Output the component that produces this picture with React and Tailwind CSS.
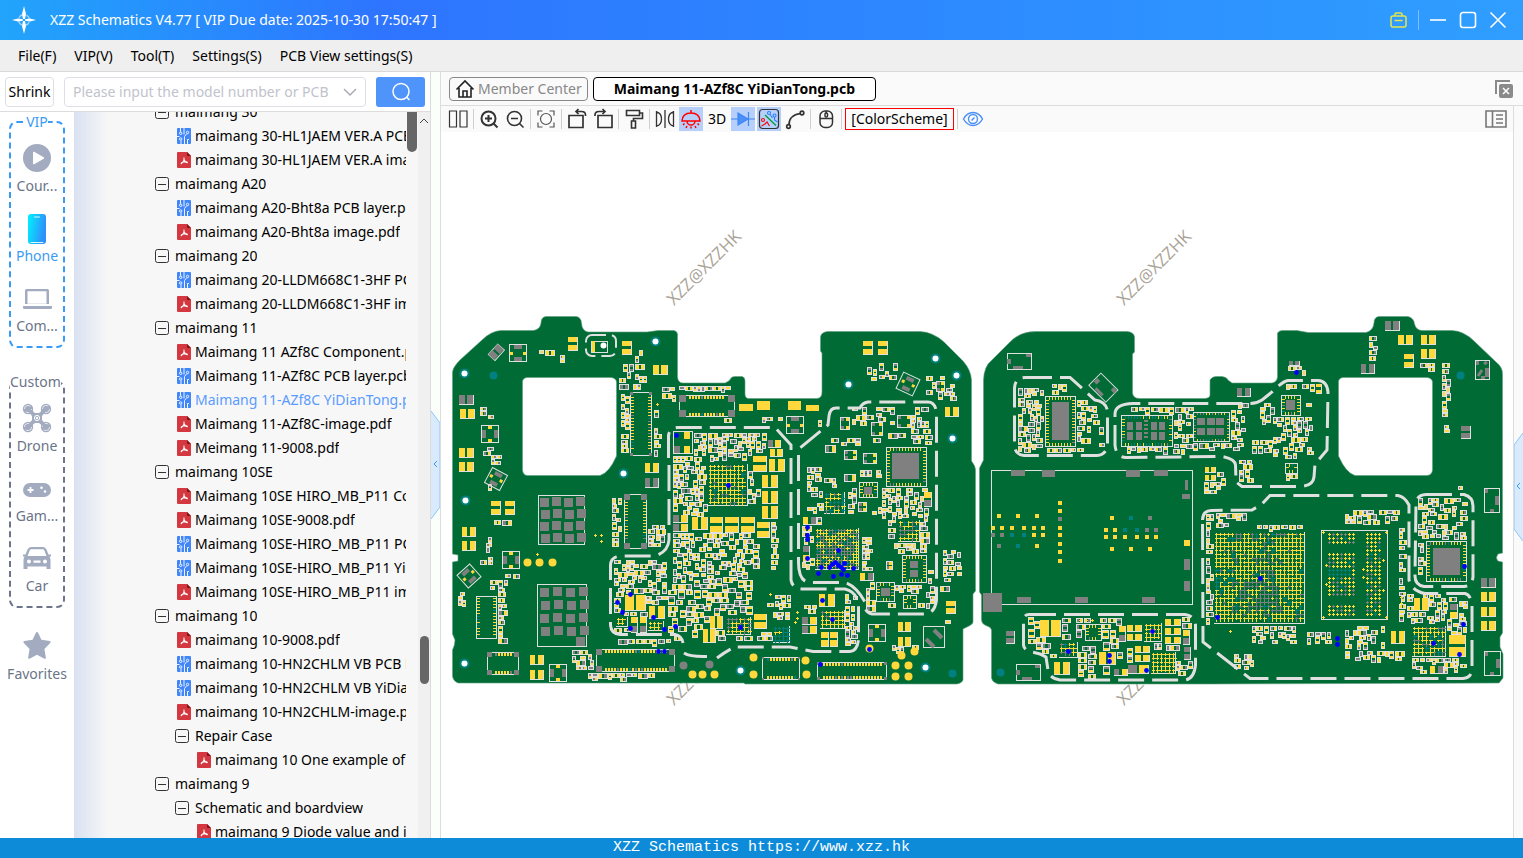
import { useState } from "react";

const MENUS = ["File(F)", "VIP(V)", "Tool(T)", "Settings(S)", "PCB View settings(S)"];

// type: group | pcb | pdf, level: indent in the tree
const TREE = [
  { type: "group", level: 0, name: "maimang 30" },
  { type: "pcb", level: 1, name: "maimang 30-HL1JAEM VER.A PCB layer.pcb" },
  { type: "pdf", level: 1, name: "maimang 30-HL1JAEM VER.A image.pdf" },
  { type: "group", level: 0, name: "maimang A20" },
  { type: "pcb", level: 1, name: "maimang A20-Bht8a PCB layer.pcb" },
  { type: "pdf", level: 1, name: "maimang A20-Bht8a image.pdf" },
  { type: "group", level: 0, name: "maimang 20" },
  { type: "pcb", level: 1, name: "maimang 20-LLDM668C1-3HF PCB layer.pcb" },
  { type: "pdf", level: 1, name: "maimang 20-LLDM668C1-3HF image.pdf" },
  { type: "group", level: 0, name: "maimang 11" },
  { type: "pdf", level: 1, name: "Maimang 11 AZf8C Component.pdf" },
  { type: "pcb", level: 1, name: "Maimang 11-AZf8C PCB layer.pcb" },
  { type: "pcb", level: 1, name: "Maimang 11-AZf8C YiDianTong.pcb" },
  { type: "pdf", level: 1, name: "Maimang 11-AZf8C-image.pdf" },
  { type: "pdf", level: 1, name: "Meimang 11-9008.pdf" },
  { type: "group", level: 0, name: "maimang 10SE" },
  { type: "pdf", level: 1, name: "Maimang 10SE HIRO_MB_P11 Component.pdf" },
  { type: "pdf", level: 1, name: "Maimang 10SE-9008.pdf" },
  { type: "pcb", level: 1, name: "Maimang 10SE-HIRO_MB_P11 PCB layer.pcb" },
  { type: "pcb", level: 1, name: "Maimang 10SE-HIRO_MB_P11 YiDianTong.pcb" },
  { type: "pdf", level: 1, name: "Maimang 10SE-HIRO_MB_P11 image.pdf" },
  { type: "group", level: 0, name: "maimang 10" },
  { type: "pdf", level: 1, name: "maimang 10-9008.pdf" },
  { type: "pcb", level: 1, name: "maimang 10-HN2CHLM VB PCB layer.pcb" },
  { type: "pcb", level: 1, name: "maimang 10-HN2CHLM VB YiDianTong.pcb" },
  { type: "pdf", level: 1, name: "maimang 10-HN2CHLM-image.pdf" },
  { type: "group", level: 1, name: "Repair Case" },
  { type: "pdf", level: 2, name: "maimang 10 One example of repair.pdf" },
  { type: "group", level: 0, name: "maimang 9" },
  { type: "group", level: 1, name: "Schematic and boardview" },
  { type: "pdf", level: 2, name: "maimang 9 Diode value and image.pdf" },
];

const INDENT = ["pl-[81px]", "pl-[101px]", "pl-[121px]"];

/* ---------- board drawing ---------- */

const layers = { line: [], yellow: [], gray: [], teal: [], blue: [] };
const taken = [];

let seed = 20251;
const rnd = () => {
  seed = (seed * 16807) % 2147483647;
  return seed / 2147483647;
};

const fill = (c, x, y, w, h) => layers[c].push(`M${x} ${y}h${w}v${h}h${-w}z`);
const frame = (x, y, w, h) => layers.line.push(`M${x + 0.5} ${y + 0.5}h${w - 1}v${h - 1}h${1 - w}z`);
const reserve = (x, y, w, h) => taken.push([x, y, w, h]);
const isFree = (x, y, w, h) =>
  !taken.some(([a, b, c, d]) => x < a + c && a < x + w && y < b + d && b < y + h);

// two pads, split across (h) or down (v)
const pair = (x, y, w, h, dir = "h", c = "yellow", c2 = c) => {
  layers.line.push(`M${x} ${y + h + 0.5}h${w + 0.5}V${y}`);
  if (dir === "h") {
    const p = Math.floor((w - 2) / 2);
    fill(c, x, y, p, h);
    fill(c2, x + w - p, y, p, h);
  } else {
    const p = Math.floor((h - 2) / 2);
    fill(c, x, y, w, p);
    fill(c2, x, y + h - p, w, p);
  }
  reserve(x, y, w + 1, h + 1);
};

// framed part with a pad in the middle of each side
const quad = (x, y, s, sides) => {
  frame(x, y, s, s);
  const m = Math.floor(s / 2);
  const a = sides === "gray-lr";
  fill(a ? "gray" : "yellow", x + 1, y + m - (a ? 4 : 1), a ? 4 : 3, a ? 8 : 3);
  fill(a ? "gray" : "yellow", x + s - (a ? 5 : 4), y + m - (a ? 4 : 1), a ? 4 : 3, a ? 8 : 3);
  fill(a ? "yellow" : "gray", x + m - (a ? 2 : 4), y + 1, a ? 4 : 8, a ? 3 : 4);
  fill(a ? "yellow" : "gray", x + m - (a ? 2 : 4), y + s - (a ? 4 : 5), a ? 4 : 8, a ? 3 : 4);
  reserve(x, y, s, s);
};

const mixed = (mix) => {
  const r = rnd();
  if (r < mix[0]) return "yellow";
  return r < mix[0] + mix[1] ? "gray" : "teal";
};

const ring = (x, y, w, h, step = 3, mix = [0.85, 0.1], len = 3) => {
  frame(x, y, w, h);
  for (let i = x + 4; i < x + w - 4; i += step) {
    fill(mixed(mix), i, y + 1, 1, len);
    fill(mixed(mix), i, y + h - 1 - len, 1, len);
  }
  for (let j = y + 4; j < y + h - 4; j += step) {
    fill(mixed(mix), x + 1, j, len, 1);
    fill(mixed(mix), x + w - 1 - len, j, len, 1);
  }
  reserve(x, y, w, h);
};

const connector = (x, y, w, h, dir, end = 6) => {
  frame(x, y, w, h);
  if (dir === "h") {
    for (let i = x + end + 3; i < x + w - end - 3; i += 3) {
      fill(mixed([0.85, 0.1]), i, y + 1, 2, 3);
      fill(mixed([0.85, 0.1]), i, y + h - 4, 2, 3);
    }
  } else {
    for (let j = y + end + 2; j < y + h - end - 2; j += 3) {
      fill(mixed([0.8, 0.1]), x + 1, j, 3, 1);
      fill(mixed([0.8, 0.1]), x + w - 4, j, 3, 1);
    }
  }
  if (end > 0) {
    [[x, y], [x + w - end, y], [x, y + h - end], [x + w - end, y + h - end]].forEach(([a, b]) =>
      fill("gray", a, b, end, end)
    );
  }
  reserve(x, y, w, h);
};

const plus = (c, x, y) => layers[c].push(`M${x - 1} ${y}h3v1h-3zM${x} ${y - 1}h1v3h-1z`);

const bga = (x, y, w, h, mix, pitch = 4, pick = null) => {
  for (let j = y + 2; j < y + h - 1; j += pitch) {
    for (let i = x + 2; i < x + w - 1; i += pitch) {
      const c = pick ? pick(i - x, j - y) : mixed(mix);
      plus(c, i, j);
      if (rnd() < 0.75) fill(c, i, j, pitch, 1);
      if (rnd() < 0.75) fill(c, i, j, 1, pitch);
    }
  }
  layers.line.push(`M${x} ${y + h + 0.5}h${w + 0.5}V${y}`);
  reserve(x, y, w + 1, h + 1);
};

// ball colours of the processor: gray core bands, yellow border
const cpuBall = (i, j) => {
  if (i > 24 && i < 66 && j > 54 && j < 78) return mixed([0.2, 0.75]);
  if (i > 16 && i < 66 && Math.floor(j / 8) % 3 === 0) return mixed([0.35, 0.6]);
  if (i > 46 && i < 62) return mixed([0.45, 0.45]);
  if (i < 18 && j > 36 && j < 60) return mixed([0.5, 0.1]);
  return mixed([0.9, 0.07]);
};

const blocks = (x, y, cols, rows, size, gap) => {
  for (let r = 0; r < rows; r++)
    for (let c = 0; c < cols; c++)
      fill("gray", x + c * (size + gap) + (r % 2), y + r * (size + gap) - (c % 2), size, size);
};

const SIZES = [[7, 4], [7, 5], [4, 7], [5, 8], [5, 4], [8, 5], [10, 6], [6, 4], [4, 6]];

// loose small parts over an area, kept off whatever is already placed
const cluster = (x, y, w, h, density = 0.8, big = false) => {
  for (let j = y; j + 4 <= y + h; j += 2) {
    for (let i = x; i + 4 <= x + w; i += 2) {
      const s = SIZES[Math.floor(rnd() * SIZES.length)];
      const pw = s[0] + (big ? 2 : 0);
      const ph = s[1] + (big ? 1 : 0);
      if (i + pw > x + w + 1 || j + ph > y + h + 1) continue;
      if (!isFree(i, j, pw, ph)) continue;
      if (rnd() > density) {
        reserve(i, j, 3, 3);
        continue;
      }
      frame(i, j, pw, ph);
      const c = rnd() < 0.64 ? "yellow" : "gray";
      const c2 = rnd() < 0.7 ? "yellow" : "gray";
      if (pw >= ph) {
        const p = Math.max(2, Math.floor((pw - 4) / 2));
        fill(c, i + 1, j + 1, p, ph - 2);
        fill(c2, i + pw - 1 - p, j + 1, p, ph - 2);
      } else {
        const p = Math.max(2, Math.floor((ph - 4) / 2));
        fill(c, i + 1, j + 1, pw - 2, p);
        fill(c2, i + 1, j + ph - 1 - p, pw - 2, p);
      }
      reserve(i, j, pw, ph);
    }
  }
};

const PAIRS = [
  // left board
  [568, 337, 9, 13, "v"], [622, 341, 9, 13, "v"], [653, 365, 14, 9], [459, 395, 14, 9, "h", "gray"],
  [460, 409, 14, 9], [459, 448, 14, 9], [459, 462, 14, 9], [491, 501, 9, 13, "v"], [505, 501, 9, 13, "v"],
  [645, 463, 13, 9], [645, 478, 13, 9, "h", "gray"], [462, 527, 13, 9], [462, 541, 13, 9],
  [530, 655, 13, 9], [530, 670, 13, 9], [863, 341, 9, 13, "v"], [878, 341, 9, 13, "v"], [945, 407, 13, 9],
  [753, 456, 13, 15, "v"], [769, 459, 15, 12], [762, 475, 15, 12], [762, 491, 15, 12], [762, 506, 15, 12],
  [710, 517, 12, 15, "v"], [725, 517, 13, 15, "v"], [741, 517, 13, 15, "v"], [757, 522, 12, 15, "v"],
  [692, 517, 15, 12], [768, 440, 12, 7, "h", "gray", "yellow"], [770, 449, 12, 7], [819, 594, 15, 12],
  [754, 614, 12, 14, "v"], [710, 616, 12, 12], [898, 622, 12, 9], [898, 637, 12, 9], [946, 601, 9, 12, "v"],
  [821, 632, 7, 14, "v"], [830, 632, 7, 14, "v"], [802, 617, 14, 7, "h", "gray", "yellow"],
  [802, 626, 14, 7, "h", "gray", "yellow"], [625, 595, 20, 15], [649, 606, 15, 12],
  [631, 617, 6, 15, "v", "yellow", "gray"], [640, 617, 6, 15, "v", "yellow", "gray"],
  [673, 515, 14, 7, "h", "gray", "yellow"], [673, 524, 14, 7, "h", "gray", "yellow"],
  [703, 629, 12, 13], [924, 492, 7, 14, "v", "yellow", "gray"], [803, 517, 13, 7, "h", "yellow", "gray"],
  [860, 573, 13, 7, "h", "yellow", "gray"], [803, 546, 6, 15, "v", "gray", "yellow"],
  // right board
  [1385, 321, 14, 9, "h", "gray"], [1398, 335, 14, 9], [1421, 335, 14, 9], [1421, 349, 14, 9],
  [1404, 354, 9, 13, "v"], [1361, 364, 13, 9, "h", "gray"], [1461, 426, 9, 12, "v", "gray"],
  [1481, 578, 14, 9, "h", "gray"], [1481, 592, 14, 9], [1481, 607, 14, 9], [1481, 621, 14, 9],
  [1237, 388, 13, 8, "h", "gray"], [1205, 467, 10, 5], [1205, 475, 10, 5], [1040, 620, 20, 16],
  [1054, 662, 15, 12], [1165, 619, 15, 6], [1165, 628, 15, 6], [1165, 637, 15, 6], [1127, 625, 14, 6],
  [1127, 634, 14, 6], [1135, 646, 14, 6], [1135, 655, 14, 6], [1099, 652, 16, 12], [1128, 665, 20, 8, "h", "gray", "yellow"],
  [1006, 631, 8, 12, "v", "gray"], [1119, 626, 6, 15, "v", "yellow", "gray"], [1414, 598, 14, 12],
  [1449, 635, 16, 21, "v"], [1391, 631, 13, 12], [1430, 666, 13, 7, "h", "yellow", "gray"],
  [1450, 604, 7, 14, "v", "gray", "yellow"], [1289, 361, 10, 4, "h", "gray"], [1316, 384, 5, 9, "v"],
  [1114, 669, 13, 6, "h", "gray", "yellow"], [1183, 630, 6, 14, "v", "yellow", "gray"], [1184, 647, 6, 12, "v", "gray"],
];
PAIRS.forEach((p) => pair(...p));

[[509, 344, 18, "gray-tb"], [481, 425, 18, "gray-lr"], [502, 551, 18, "gray-lr"], [549, 664, 18, "gray-lr"],
  [786, 416, 18, "gray-tb"], [868, 624, 18, "gray-lr"]].forEach((q) => quad(...q));

// connectors
connector(630, 392, 22, 64, "v", 3);
connector(679, 395, 56, 22, "h", 7);
connector(624, 494, 23, 55, "v", 6);
connector(476, 596, 21, 43, "v", 0);
connector(487, 652, 32, 23, "h", 5);
connector(596, 649, 79, 23, "h", 6);
connector(762, 657, 38, 23, "h", 2);
connector(817, 662, 70, 18, "h", 3);

// shield pads
frame(538, 495, 47, 50);
blocks(540, 498, 4, 4, 9, 3);
reserve(538, 495, 47, 50);
frame(537, 584, 50, 63);
blocks(540, 588, 4, 4, 9, 4);
fill("gray", 576, 637, 9, 9);
reserve(537, 584, 50, 63);

// packages, left board
bga(708, 464, 39, 41, [0.85, 0.1]);
bga(815, 528, 43, 41, [0.35, 0.55], 3);
bga(824, 492, 20, 21, [0.4, 0.3], 4);
bga(898, 520, 21, 21, [0.7, 0.2], 4);
bga(820, 610, 24, 18, [0.9, 0.05]);
bga(726, 617, 24, 17, [0.6, 0.4]);
bga(773, 626, 16, 16, [0.1, 0]);
bga(648, 621, 15, 9, [1, 0]);
bga(616, 617, 11, 9, [0.9, 0]);
ring(886, 447, 41, 40);
fill("gray", 892, 453, 27, 26);
ring(859, 482, 19, 16);
fill("gray", 864, 487, 8, 8);
ring(902, 555, 25, 28);
fill("gray", 910, 561, 8, 7);
fill("gray", 910, 570, 8, 7);
ring(876, 582, 19, 20);
fill("gray", 881, 588, 9, 8);
ring(903, 595, 14, 14);
frame(673, 431, 20, 23);
fill("yellow", 684, 432, 6, 7);
fill("yellow", 684, 446, 6, 7);
fill("gray", 674, 446, 6, 7);
reserve(673, 431, 20, 23);
frame(591, 341, 17, 12);
fill("yellow", 592, 341, 3, 11);
frame(923, 626, 22, 22);
reserve(923, 626, 22, 22);
[[840, 417, 10, 13], [871, 422, 12, 14], [897, 415, 14, 13], [844, 450, 13, 10], [863, 453, 14, 11],
  [825, 445, 11, 8], [936, 381, 9, 11], [844, 474, 12, 8], [858, 502, 9, 10], [886, 561, 7, 9]].forEach(
  ([x, y, w, h]) => {
    frame(x, y, w, h);
    [[x + 1, y + 1], [x + w - 4, y + 1], [x + 1, y + h - 4], [x + w - 4, y + h - 4]].forEach(([a, b], i) =>
      fill(i % 2 ? "yellow" : "gray", a, b, 3, 3)
    );
    reserve(x, y, w, h);
  }
);
[[739, 404, 14, 7], [757, 401, 13, 9], [788, 401, 13, 9], [806, 405, 13, 6]].forEach((r) => fill("yellow", ...r));

// packages, right board
ring(1045, 396, 31, 51);
fill("gray", 1052, 402, 17, 38);
ring(1121, 415, 52, 32, 3, [0.5, 0.1]);
[1127, 1136, 1151, 1159].forEach((x) => [422, 432].forEach((y) => fill("gray", x, y, 6, 8)));
[420, 424, 428, 432, 436].forEach((y) => fill("gray", 1144, y, 4, 2));
ring(1193, 412, 37, 30, 3, [0.4, 0.5], 2);
[1197, 1207, 1216].forEach((x) => [418, 428].forEach((y) => fill("gray", x, y, 8, 7)));
bga(1214, 532, 90, 91, null, 4, cpuBall);
ring(1426, 541, 41, 41);
fill("gray", 1433, 548, 27, 27);
bga(1412, 626, 33, 30, [0.7, 0.2]);
bga(1144, 623, 17, 18, [1, 0]);
bga(1151, 652, 24, 21, [1, 0]);
bga(1059, 642, 18, 15, [0.5, 0.3]);
ring(1085, 624, 17, 17);
ring(1281, 395, 20, 21);
fill("gray", 1286, 400, 9, 10);
ring(1285, 463, 13, 11);

// memory package
frame(1321, 530, 67, 90);
reserve(1321, 530, 67, 90);
for (let j = 0; j < 21; j++) {
  const y = 534 + j * 4;
  if (j < 3 || (j > 4 && j < 16) || j > 17)
    for (let i = 0; i < 7; i++) plus(j > 8 && j < 11 && i < 6 ? "teal" : mixed([0.65, 0.3]), 1329 + i * 4, y);
  for (let i = 0; i < 4; i++) plus(mixed([0.6, 0.22]), 1367 + i * 4, y);
}
[[1323, 532], [1323, 617], [1386, 532], [1386, 617], [1326, 565], [1326, 584], [1363, 569], [1363, 577], [1383, 560], [1383, 590]].forEach(([x, y]) => plus("yellow", x, y));

// big shield on the right board
frame(991, 470, 202, 135);
[[1011, 470, 14, 6], [1042, 470, 13, 7], [1126, 470, 14, 7], [1154, 470, 14, 6], [1185, 480, 3, 10],
  [1182, 494, 8, 5], [1184, 559, 6, 11], [1184, 581, 6, 10], [1017, 597, 14, 6], [1075, 597, 13, 6],
  [1142, 597, 13, 6], [983, 593, 19, 19]].forEach((r) => fill("gray", ...r));
fill("yellow", 1184, 540, 6, 6);
[503, 511, 519, 528, 535, 544, 552, 561].forEach((y) => fill(y === 519 ? "gray" : "yellow", 1058, y - 2, 4, 4));
const TESTPADS = {
  yellow: [[999, 516], [1018, 516], [1037, 516], [993, 528], [1002, 528], [1012, 528], [1024, 528], [1034, 528],
    [1043, 528], [1034, 535], [1043, 535], [1037, 546], [1112, 518], [1106, 530], [1115, 530], [1106, 537],
    [1115, 537], [1125, 537], [1137, 537], [1147, 537], [1156, 537], [1112, 549], [1131, 549], [1150, 549]],
  gray: [[993, 535], [1002, 535], [999, 546], [1150, 518], [1147, 530], [1156, 530]],
  teal: [[1012, 535], [1024, 535], [1018, 546], [1131, 518], [1125, 530], [1137, 530]],
};
Object.entries(TESTPADS).forEach(([c, list]) => list.forEach(([x, y]) => fill(c, x - 2, y - 2, 4, 4)));

// plain outlines with a few pads
[[1007, 353, 25, 17], [1016, 664, 25, 17], [1475, 360, 15, 20], [1484, 488, 16, 25], [1484, 651, 17, 25]].forEach(
  ([x, y, w, h]) => {
    frame(x, y, w, h);
    if (w > h) {
      fill("gray", x, y + 6, 4, 5);
      fill("gray", x + 6, y + h - 4, 10, 3);
      fill("gray", x + w - 6, y + 1, 5, 3);
    } else {
      fill("gray", x + 1, y + 1, 3, 4);
      fill("gray", x + w - 5, y + 8, 4, 9);
      fill("gray", x + 6, y + h - 4, 4, 3);
    }
    reserve(x, y, w, h);
  }
);

const CLUSTERS = [
  // left board
  [539, 350, 16, 5, 0.9], [560, 351, 5, 17], [619, 364, 28, 26, 0.5], [635, 348, 8, 18], [621, 394, 8, 60, 0.9], [654, 408, 7, 52, 0.6],
  [662, 387, 14, 14, 0.6], [679, 386, 54, 8, 0.95], [712, 418, 32, 4, 0.6], [480, 403, 16, 18, 0.5], [483, 447, 18, 18, 0.5], [476, 480, 28, 12, 0.2],
  [494, 520, 24, 6, 0.7], [486, 537, 6, 28, 0.9], [480, 560, 8, 8], [694, 433, 72, 28, 0.9], [673, 456, 34, 60, 0.85], [748, 465, 12, 50, 0.45],
  [612, 498, 10, 53, 0.8], [648, 525, 18, 22, 0.8], [673, 533, 80, 20, 0.8], [673, 553, 72, 30, 0.7], [668, 560, 85, 80, 0.65, true],
  [614, 560, 52, 36, 0.75], [614, 596, 56, 36, 0.8], [498, 588, 9, 56, 0.9], [503, 574, 18, 4, 0.9], [490, 580, 22, 10, 0.6],
  [458, 592, 8, 14, 0.9], [572, 650, 22, 22, 0.8], [618, 639, 57, 7, 0.95], [588, 673, 66, 8, 0.9],
  [747, 540, 12, 32, 0.95, true], [771, 522, 7, 50, 0.95], [867, 363, 30, 18, 0.35], [852, 407, 42, 18, 0.6], [911, 407, 21, 38, 0.7],
  [827, 438, 56, 8, 0.6], [852, 470, 30, 10, 0.5], [882, 433, 24, 9, 0.5], [807, 467, 16, 58, 0.7], [824, 478, 18, 12, 0.5], [848, 488, 10, 28, 0.7],
  [882, 488, 50, 30, 0.75], [888, 512, 9, 26, 0.8], [920, 512, 10, 40, 0.7], [894, 543, 34, 11, 0.9], [868, 507, 22, 8, 0.6],
  [802, 524, 12, 48, 0.6], [862, 537, 10, 34, 0.8], [926, 376, 30, 26, 0.4], [943, 550, 18, 26, 0.7], [940, 578, 12, 16, 0.5],
  [926, 570, 9, 38, 0.8], [866, 580, 10, 32, 0.6], [884, 603, 50, 9, 0.8], [893, 585, 30, 10, 0.8], [767, 595, 26, 14, 0.75],
  [773, 612, 16, 8, 0.9], [845, 594, 12, 52, 0.8], [804, 605, 16, 8, 0.8], [735, 632, 40, 8, 0.7], [884, 645, 34, 8, 0.5],
  [762, 417, 24, 6, 0.6], [808, 420, 16, 6, 0.8], [945, 620, 6, 4],
  // right board
  [1018, 388, 26, 64, 0.75], [1052, 384, 22, 10, 0.9], [1077, 400, 22, 24, 0.7], [1077, 426, 16, 20, 0.7], [1088, 418, 16, 8, 0.8],
  [1099, 427, 5, 22, 0.9], [1047, 448, 38, 5, 0.95], [1131, 407, 66, 7, 0.9], [1174, 414, 18, 34, 0.8], [1127, 447, 64, 8, 0.85],
  [1191, 443, 54, 8, 0.7], [1231, 410, 14, 34, 0.75], [1238, 403, 14, 8, 0.7], [1204, 482, 16, 12, 1], [1217, 472, 8, 20, 0.6], [1239, 460, 14, 22, 0.8],
  [1273, 417, 40, 43, 0.65], [1260, 403, 18, 24, 0.5], [1252, 440, 22, 16, 0.7], [1286, 384, 28, 8, 0.85], [1302, 403, 10, 8], [1286, 474, 14, 9],
  [1288, 366, 18, 10, 0.8], [1369, 336, 8, 26, 0.9], [1420, 363, 19, 8, 0.8], [1442, 363, 8, 70, 0.75], [1345, 510, 54, 15, 0.8],
  [1399, 528, 7, 98, 0.8], [1418, 498, 50, 42, 0.65], [1418, 543, 7, 36, 0.95], [1407, 594, 40, 31, 0.7], [1447, 597, 20, 38, 0.7],
  [1412, 658, 54, 16, 0.75], [1345, 626, 40, 24, 0.65], [1345, 651, 62, 11, 0.7], [1307, 632, 27, 14, 0.7], [1252, 626, 45, 18, 0.75],
  [1257, 525, 54, 6, 0.95], [1206, 514, 8, 112, 0.85], [1216, 513, 34, 10, 0.9], [1216, 523, 12, 8, 0.8], [1234, 654, 20, 16, 0.7], [1454, 486, 14, 4],
  [1028, 617, 24, 36, 0.75, true], [1060, 618, 64, 26, 0.6, true], [1050, 650, 12, 10, 0.7], [1078, 640, 20, 40, 0.6, true], [1103, 640, 32, 38, 0.6, true],
  [1142, 641, 48, 36, 0.5], [1180, 617, 14, 60, 0.6],
];
CLUSTERS.forEach((c) => cluster(...c));

const BOARDS = [
  "M452.5 372Q453 367 460 360L482 340Q491 331 501 330.5H533Q540 330 541 323Q541 317 546 316.5H576Q581 317 581.5 323Q582 331 588 332H647L658 330.5H674Q677 331 677.5 334V377Q678 383 683 383H725Q730 381 731 378Q732 376.500 735 376.500H742Q745 377 745 381V394Q745 398.500 749 398.500H817Q822 398 822 392V353L820.500 351V337Q821 332 828 331.500H920Q933 332 944 342L963 361Q971 370 971.500 380V461Q975.500 466 975.500 470V591L973 594V622Q973 624 969 626L963 629V680Q962 683 957 684H745L744 683H458Q453 681 452.500 676V650Q455 645 455 640L452.500 634V562L458 561V555L452.500 554ZM527 377.500Q522.500 378 522.500 382V470Q523 475.500 528 475.500H600Q609 473 616.500 456V382Q616 378 611 377.500Z",
  "M1036 331.500H1127Q1134 332 1134.500 337V352L1132.500 354V393Q1133 398.500 1140 398.500H1205Q1210 398 1210 395V380Q1212 376.500 1216 376.500H1222Q1227 377 1228 380L1232 383H1272Q1277 382 1277.500 377V333Q1279 330.500 1282 330.500H1297L1308 332.500H1366Q1373 331 1374 323Q1374 317 1379 316.500H1408Q1414 318 1414.500 324Q1416 330 1422 330.500H1452Q1464 331 1474 341L1496 362Q1502.500 367 1502.500 374V553L1498 554Q1495 558 1498 561L1502.500 562V633L1500 637V647L1503 654V678L1499 683L1210 684H998Q992 682 991.500 678V630Q991 627 987 626Q981.500 624 981.500 620V595L979.500 592V468L983.500 460V380Q984 366 992 360L1010 342Q1020 331.500 1036 331.500ZM1343 377.500Q1338.500 378 1338.500 382V456Q1346 473 1355 475.500H1427Q1432 475 1432.500 470V382Q1432 378 1427 377.500Z",
];

const FENCES = [
  "M668.500 458V436Q669 428 678 427.500H775L791 445V580Q792 588 802 589H845Q857 592 858.500 605V640Q857 651 850 651.500H813L790 647H735Q728 650 717 658",
  "M669 465V540Q668 552 655 556H620Q611 557 610.500 565V625Q611 634 620 634.500H675Q682 636 683 643",
  "M684 653Q690 657 707 656.500",
  "M798.500 455V560Q798 582 810 582.500H845Q856 586 865 602V607Q866 613 872 614H925Q935 613 936.500 600V412Q935 402 928 402H868Q862 403 860 408H836Q830 408 829 416L828 425L800 448",
  "M1026 377.500H1070L1095 400Q1107 402 1107.500 412V445Q1106 455 1097 455.500H1024Q1014.500 454 1014.500 445V388Q1015 377 1026 377.500",
  "M1133 403.500Q1115 404 1115 414V445Q1116 457 1126 457.500L1222 456.500Q1235 459 1235.500 465L1236 482L1242 486.500H1300Q1313 486 1314 477L1315 464L1327 450L1328 392Q1327 381 1318 380.500H1288Q1283 381 1272 392L1262 400Q1256 404 1248 403.500Z",
  "M1202.500 520Q1203 510 1212 510.500L1252 510L1262 504L1270 495.500H1398Q1405 497 1409 505V580Q1412 591 1425 593.500H1465Q1471 595 1472 605V670Q1471 678 1463 678.500H1250L1203 642Z",
  "M1426 494.500H1464Q1473 497 1473 506V577Q1472 586 1464 586.500H1424Q1415 585 1415 576L1416 503Q1417 495 1426 494.500",
  "M1030 614.500H1185Q1195 616 1195.500 625V665Q1194 679 1185 680H1060Q1049 678 1048 670L1046 657Q1040 653 1031 652Q1024 650 1023.500 645V620Q1024 614 1030 614.500",
];

const HOLES = [[464, 373], [655, 341], [623, 473], [465, 500], [464, 663], [848, 384], [935, 358], [956, 375], [952, 438], [740, 670], [925, 667]];
const TEAL_DOTS = [[493, 375], [952, 673], [1000, 672], [1460, 375]];
const GOLD_DOTS = [[527, 562], [539, 562], [552, 562], [692, 674], [702, 674], [714, 674], [753, 657], [753, 674], [805, 660], [806, 674], [895, 665], [895, 676], [908, 665], [908, 676], [901, 655], [914, 651], [869, 648]];
const GRAY_DOTS = [[683, 665], [709, 664]];
const BLUE_DOTS = [
  [676, 435], [728, 485], [630, 594], [617, 602], [622, 612], [653, 617], [630, 628], [664, 629], [675, 626], [658, 651], [664, 651],
  [807, 527], [807, 535], [807, 539], [807, 558], [821, 567], [818, 573], [833, 576], [841, 574], [847, 575], [838, 550], [829, 567],
  [832, 564], [835, 562], [838, 565], [841, 567], [844, 563], [843, 569], [853, 568], [822, 600], [832, 619], [740, 627], [869, 649], [820, 664],
  [1152, 631], [1068, 651], [1109, 655], [1109, 661], [1146, 670], [1217, 617], [1260, 578], [1337, 638], [1337, 644], [1296, 372],
  [1464, 566], [1463, 624], [1433, 643], [1459, 654],
];
const PLUSES = [[537, 554], [595, 535], [601, 535], [601, 541], [657, 404], [770, 594], [797, 612], [797, 618], [795, 622], [1080, 620], [1086, 620], [1092, 620], [1230, 631], [1401, 597], [1401, 603]];
PLUSES.forEach(([x, y]) => plus("yellow", x, y));

const chunk = (list, size = 150) => {
  const out = [];
  for (let i = 0; i < list.length; i += size) out.push(list.slice(i, i + size).join(""));
  return out;
};

const Tilted = ({ x, y, deg, size = 17 }) => (
  <g transform={`translate(${x} ${y}) rotate(${deg})`}>
    <rect x={-size / 2} y={-size / 2} width={size} height={size} fill="none" stroke="#e0e0e0" />
    <path d="M-4-7h8v4h-8zM-4 3h8v4h-8z" fill="#808080" />
    <path d="M-7-2h3v3h-3zM4-2h3v3H4z" fill="#ffd83c" />
  </g>
);

const Dots = ({ list, r, color }) => list.map(([x, y], i) => <circle key={i} cx={x + 0.5} cy={y + 0.5} r={r} fill={color} />);

const Layer = ({ list, color }) => chunk(list).map((d, i) => <path key={i} d={d} fill={color} />);

const BoardView = () => (
  <svg
    viewBox="441 132 1072 706"
    preserveAspectRatio="xMinYMin meet"
    className="block h-full w-full"
    role="img"
    aria-label="Board view"
  >
    <g fill="#aaa397" fontFamily="Open Sans, sans-serif" fontSize="17">
      {[[674, 306], [1124, 306], [674, 706], [1124, 706]].map(([x, y]) => (
        <text key={`${x}-${y}`} transform={`translate(${x} ${y}) rotate(-45)`}>
          XZZ@XZZHK
        </text>
      ))}
    </g>
    {BOARDS.map((d) => (
      <path key={d} d={d} fill="#006b35" fillRule="evenodd" stroke="#5f9f80" strokeWidth="0.6" />
    ))}
    <g shapeRendering="crispEdges">
      {chunk(layers.line).map((d, i) => (
        <path key={i} d={d} fill="none" stroke="#e0e0e0" />
      ))}
      <Layer list={layers.gray} color="#808080" />
      <Layer list={layers.yellow} color="#ffd83c" />
      <Layer list={layers.teal} color="#008080" />
    </g>
    <Tilted x={496} y={479} deg={28} />
    <Tilted x={469} y={576} deg={-42} />
    <Tilted x={908} y={384} deg={25} size={18} />
    <g transform="translate(496 352) rotate(-48)">
      <rect x="-7" y="-4" width="14" height="9" fill="none" stroke="#e0e0e0" />
      <path d="M-7-4h6v8h-6zM1-4h6v8H1z" fill="#808080" />
    </g>
    <g transform="translate(1103 388) rotate(45)">
      <rect x="-12" y="-9" width="24" height="17" fill="none" stroke="#e0e0e0" />
      <path d="M-11-3h4v5h-4zM-5 4H5v3H-5zM7-8h5v4H7z" fill="#808080" />
    </g>
    <path d="M934 630l8 8M926 639l8 8" stroke="#808080" strokeWidth="4" />
    <path d="M1478 376l4-6M1484 364l3-2" stroke="#808080" strokeWidth="3" />
    <g fill="none" stroke="#e0e0e0" strokeWidth="3">
      {FENCES.map((d) => (
        <path key={d} d={d} strokeDasharray="26 8" />
      ))}
      <rect x="586" y="335" width="30" height="21" rx="6" strokeWidth="2" strokeDasharray="14 6" />
    </g>
    <Dots list={HOLES} r={5} color="#008080" />
    <Dots list={HOLES} r={3} color="#fff" />
    <circle cx="603.5" cy="345.5" r="3" fill="#fff" />
    <Dots list={TEAL_DOTS} r={4} color="#008080" />
    <Dots list={GOLD_DOTS} r={4} color="#ffd83c" />
    <Dots list={GRAY_DOTS} r={4} color="#808080" />
    <Dots list={BLUE_DOTS} r={2.4} color="#00f" />
  </svg>
);

/* ---------- icons ---------- */

const PcbIcon = () => (
  <svg viewBox="0 0 14 16" className="h-4 w-3.5 shrink-0">
    <rect width="14" height="16" rx="1" fill="#4287fa" />
    <g fill="none" stroke="#fff" strokeWidth=".9">
      <path d="M3.500 0v4M7 0v6.500M7.500 16V8.500L9.500 6M10.500 16v-4.500H12M4 16v-3.500M0 8.500h2.500" />
      <circle cx="3.700" cy="5.300" r="1.200" />
      <circle cx="10.500" cy="4.500" r="1.200" />
      <circle cx="3.700" cy="11" r="1.200" />
    </g>
  </svg>
);

const PdfIcon = () => (
  <svg viewBox="0 0 14 16" className="h-4 w-3.5 shrink-0">
    <path d="M1 0h9l4 4v11a1 1 0 0 1-1 1H1a1 1 0 0 1-1-1V1a1 1 0 0 1 1-1z" fill="#d33841" />
    <path d="M10 0l4 4h-3.500a.5.500 0 0 1-.5-.5z" fill="#8a1018" />
    <path d="M6.800 5.500c1 2-1 5-3 6.500M6.800 7c.5 2 2 3.500 4 3.700M4.200 10.800c2-1 4-1.300 6-.9" fill="none" stroke="#fff" strokeWidth="1.100" />
  </svg>
);

const FoldIcon = () => (
  <svg viewBox="0 0 14 14" className="size-3.5 shrink-0" fill="none" stroke="#333" strokeWidth="1">
    <rect x=".5" y=".5" width="13" height="13" rx="2" />
    <path d="M3 7.500h8" />
  </svg>
);

const sideIcons = {
  course: (
    <>
      <circle cx="14" cy="14" r="14" fill="#a2abbf" />
      <path d="M10 8.500v11a.8.800 0 0 0 1.200.7l9.500-5.500a.8.800 0 0 0 0-1.400l-9.500-5.500a.8.800 0 0 0-1.200.7z" fill="#fff" />
    </>
  ),
  phone: (
    <>
      <defs>
        <linearGradient id="phoneFill" x1="0" x2="1" y1="0" y2="0.300">
          <stop offset="0" stopColor="#00f2fe" />
          <stop offset="1" stopColor="#2f8ffb" />
        </linearGradient>
      </defs>
      <rect x="5" y="0" width="18" height="30" rx="3" fill="url(#phoneFill)" />
      <path d="M11.500 3h5M8 28.500h12" stroke="#d5faff" strokeLinecap="round" />
    </>
  ),
  computer: (
    <path d="M2 20V6.500A1.500 1.500 0 0 1 3.500 5h21A1.500 1.500 0 0 1 26 6.500V20zM4.500 7.300v12.400h19V7.300zM0 22h29v1.500a1.500 1.500 0 0 1-1.500 1.500h-26A1.500 1.500 0 0 1 0 23.500z" fill="#a2abbf" fillRule="evenodd" />
  ),
  drone: (
    <g fill="#a2abbf">
      {[[5, 5], [23, 5], [5, 23], [23, 23]].map(([x, y]) => (
        <g key={`${x}-${y}`}>
          <circle cx={x} cy={y} r="5.200" />
          <circle cx={x} cy={y} r="3.600" fill="none" stroke="#fff" strokeWidth=".7" strokeDasharray="8 3" />
        </g>
      ))}
      <path d="M6 4l6 5h4l6-5 2 2-5 6v4l5 6-2 2-6-5h-4l-6 5-2-2 5-6v-4L4 6z" />
      <circle cx="14" cy="14" r="2.600" fill="none" stroke="#fff" />
      <circle cx="14" cy="14" r="1.200" fill="#fff" />
    </g>
  ),
  game: (
    <>
      <rect x="0" y="9" width="28" height="14" rx="7" fill="#a2abbf" />
      <path d="M4.500 16h6M7.500 13v6" stroke="#fff" strokeWidth="1.800" />
      <circle cx="18.500" cy="13.800" r="1.300" fill="#fff" />
      <circle cx="22" cy="17.500" r="1.300" fill="#fff" />
    </>
  ),
  car: (
    <path d="M8 3h12q2.500 0 3.500 2.500l2 5h2.500v2h-1.500q1 1.500 1 3.500v9h-4v-2.500h-19V25H.5v-9q0-2 1-3.500H0v-2h2.500l2-5Q5.500 3 8 3zM8.300 5.200q-1.200 0-1.700 1.300l-2 5.500h18.800l-2-5.500q-.5-1.300-1.700-1.300zM6 15.500a2 2 0 1 0 0 4 2 2 0 0 0 0-4zM22 15.500a2 2 0 1 0 0 4 2 2 0 0 0 0-4zM10.500 16.500v2.300h7v-2.300z" fill="#a2abbf" fillRule="evenodd" />
  ),
  star: (
    <path d="M14 0q.8 0 1.200 1l3.200 6.800 8.300 1.200q1.500.5.700 1.800l-6 6.200 1.500 8.700q0 1.500-1.500 1L14 22.700l-7.400 4q-1.500.5-1.500-1L6.600 17l-6-6.200q-.8-1.300.7-1.800l8.300-1.200L12.800 1q.4-1 1.200-1z" fill="#a2abbf" />
  ),
};

const SideItem = ({ icon, label, active }) => (
  <button type="button" className="flex w-full flex-col items-center gap-1">
    <svg viewBox="0 0 28 28" className="size-7 overflow-visible">
      {sideIcons[icon]}
    </svg>
    <span className={`text-sm leading-5 whitespace-nowrap ${active ? "text-[#3a9bf5]" : "text-[#6b7488]"}`}>{label}</span>
  </button>
);

const toolIcons = {
  split: <path d="M3.500 4h7v16h-7zM14 4h7v16h-7z" />,
  zoomIn: (
    <g strokeWidth="2">
      <circle cx="11.500" cy="11.500" r="7" />
      <path d="M8 11.500h7M11.500 8v7M16.500 16.500l4 4" />
    </g>
  ),
  zoomOut: (
    <g strokeWidth="1.600">
      <circle cx="11.500" cy="11.500" r="7" />
      <path d="M8 11.500h7M16.500 16.500l4 4" />
    </g>
  ),
  fit: (
    <g stroke="#555">
      <circle cx="12" cy="12" r="5.500" />
      <path d="M4 8.500V4h4.500M15.500 4H20v4.500M20 15.500V20h-4.500M8.500 20H4v-4.500" />
    </g>
  ),
  rotateLeft: <path strokeWidth="1.700" d="M4 8.500h14v12H4zM20.500 9V8q0-3.500-4-3.500H11M13.500 2l-2.500 2.500 2.500 2.500" />,
  rotateRight: <path strokeWidth="1.700" d="M7 8.500h14v12H7zM4 9V8q0-3.500 4-3.500h6M11.500 2l2.500 2.500-2.500 2.500" />,
  roller: <path strokeWidth="1.600" d="M4.500 3.500h13v5h-13zM17.500 6h3v5.500h-9V14M9.500 14h4v7h-4z" />,
  mirror: <path strokeWidth="1.300" d="M3.500 4v16M3.500 5q5 1 5 7t-5 7M12 3v18M20.500 4v16M20.500 5q-5 1-5 7t5 7" />,
  lamp: (
    <g stroke="red" strokeWidth="1.500">
      <path d="M3 14q.5-8 9-8t9 8zM12 6V3M8 14.500q.5 3.500 4 3.500t4-3.500M5.500 16.500L4 18M18.500 16.500L20 18M8 19l-1 2M16 19l1 2M12 19.500v2" />
    </g>
  ),
  diode: (
    <g stroke="#3f86f5" fill="#4a90f8">
      <path d="M0 12h24M17.500 5v14" />
      <path d="M7 6l10 6-10 6z" />
    </g>
  ),
  route: (
    <g>
      <rect x="2.500" y="2.500" width="19" height="19" rx="3" stroke="#333" strokeWidth="1.200" />
      <path stroke="#00a038" d="M8 8l11 10.500" strokeWidth="1.400" />
      <g stroke="#2a80ff" strokeWidth="1.100">
        <circle cx="12" cy="6" r="1.500" />
        <circle cx="17.500" cy="8.500" r="1.500" />
        <path d="M13 7.500l2.500 3.500M17.500 10v3l3 2" />
      </g>
      <g stroke="red" strokeWidth="1.100">
        <circle cx="6" cy="13" r="1.500" />
        <path d="M4.500 19l3.500-2 2-2 2.500 4" />
      </g>
    </g>
  ),
  curve: (
    <g strokeWidth="1.700">
      <path d="M6 18q0-10 11.500-11.500" />
      <circle cx="5.500" cy="19.500" r="1.800" />
      <circle cx="19" cy="6" r="1.800" />
    </g>
  ),
  mouse: (
    <g strokeWidth="1.500">
      <rect x="6" y="4" width="12.500" height="16.500" rx="5" />
      <path d="M6 11.500h12.500M12.200 4v2.500" />
      <rect x="11" y="6" width="2.500" height="4" rx="1" />
    </g>
  ),
  eye: (
    <g stroke="#4a90f8" strokeWidth="1.400">
      <path d="M2.500 12Q6 5.500 12 5.500T21.500 12Q18 18.500 12 18.500T2.500 12z" />
      <circle cx="12" cy="12" r="4.500" />
      <path d="M10.500 13.500l3-3" />
    </g>
  ),
};

const ToolButton = ({ icon, title, on }) => (
  <button type="button" aria-label={title} className={`flex size-6 shrink-0 items-center justify-center ${on ? "bg-[#b7d0fb]" : ""}`}>
    <svg viewBox="0 0 24 24" className="size-6" fill="none" stroke="#333" strokeWidth="1.200">
      {toolIcons[icon]}
    </svg>
  </button>
);

const Separator = () => <span className="mx-px h-5 w-px shrink-0 bg-[#cfcfcf]" />;

const Handle = ({ flip }) => (
  <svg viewBox="0 0 9 110" className="h-[110px] w-[9px]">
    <path d={flip ? "M9 1L0 13V97L9 109" : "M0 1L9 13V97L0 109"} fill="#d9eafc" stroke="#8cc6f7" />
    <path d="M6 51l-3 3 3 3" fill="none" stroke="#3a9bf5" />
  </svg>
);

/* ---------- page parts ---------- */

const TitleBar = () => (
  <header className="flex h-10 shrink-0 items-center bg-linear-to-r from-[#22a4fb] via-[#2e74ff] via-25% to-[#2f9eff] pr-4 pl-3 text-white">
    <svg viewBox="0 0 24 28" className="mr-[14px] h-7 w-6">
      <circle cx="12" cy="14" r="5.500" fill="none" stroke="#9cd4ff" strokeWidth="1.500" strokeDasharray="5 3.600" strokeDashoffset="-2" />
      <path d="M12 0l2 8-1 5h-2l-1-5zM12 28l2-8-1-5h-2l-1 5zM0 14l6-1.500 5 .8v1.400l-5 .8zM24 14l-6-1.500-5 .8v1.400l5 .8z" fill="#fff" />
    </svg>
    <h1 className="flex-1 text-sm whitespace-pre">XZZ Schematics V4.77 [ VIP Due date: 2025-10-30 17:50:47 ]</h1>
    <button type="button" aria-label="License">
      <svg viewBox="0 0 18 18" className="size-[18px]" fill="none" stroke="#e6e64a" strokeWidth="1.500">
        <rect x="1" y="5" width="15" height="11" rx="2" />
        <path d="M5 5V3.500Q5 2 6.500 2h4Q12 2 12 3.500V5M4.500 9.500h8" />
      </svg>
    </button>
    <span className="mx-2.5 h-5 w-px bg-[#7fbfff]" />
    <div className="flex items-center gap-3">
      {[["Minimize", "M1 9h16"], ["Maximize", "M4 1.500h10a2.500 2.500 0 0 1 2.500 2.500v10a2.500 2.500 0 0 1-2.500 2.500H4A2.500 2.500 0 0 1 1.500 14V4A2.500 2.500 0 0 1 4 1.500z"], ["Close", "M1.500 1.500l15 15M16.500 1.500l-15 15"]].map(([label, d]) => (
        <button key={label} type="button" aria-label={label}>
          <svg viewBox="0 0 18 18" className="size-[18px]" fill="none" stroke="#fff" strokeWidth="1.600">
            <path d={d} />
          </svg>
        </button>
      ))}
    </div>
  </header>
);

const SearchBar = () => (
  <div className="flex h-10 shrink-0 items-center border-b border-[#dcdcdc] bg-white pr-[5px] pl-[5px]">
    <button type="button" className="h-[30px] w-[49px] rounded-sm border border-[#dcdfe6] text-sm">
      Shrink
    </button>
    <div className="ml-2.5 flex h-[30px] flex-1 items-center rounded-sm border border-[#dcdfe6] pr-2 pl-2">
      <input
        aria-label="Model number"
        placeholder="Please input the model number or PCB"
        className="min-w-0 flex-1 text-sm outline-none placeholder:text-[#bfc3cc]"
      />
      <svg viewBox="0 0 14 14" className="ml-1 size-3.5" fill="none" stroke="#a8abb2" strokeWidth="1.500">
        <path d="M1 4l6 6 6-6" />
      </svg>
    </div>
    <button type="button" aria-label="Search" className="ml-2.5 flex h-[30px] w-[49px] items-center justify-center rounded-[3px] bg-[#4f94fb]">
      <svg viewBox="0 0 20 20" className="size-5" fill="none" stroke="#fff" strokeWidth="1.500">
        <circle cx="10" cy="9.500" r="8" />
        <path d="M15.500 15l3 3" />
      </svg>
    </button>
  </div>
);

const SideNav = () => (
  <nav className="flex w-[74px] shrink-0 flex-col items-center gap-6 bg-white">
    <fieldset className="w-14 rounded-lg border-2 border-dashed border-[#3a9bf5] pt-3 pb-2.5">
      <legend className="mx-auto text-sm leading-5 text-[#3a9bf5]">VIP</legend>
      <div className="flex flex-col gap-[18px]">
        <SideItem icon="course" label="Cour..." />
        <SideItem icon="phone" label="Phone" active />
        <SideItem icon="computer" label="Com..." />
      </div>
    </fieldset>
    <fieldset className="w-14 rounded-lg border-2 border-dashed border-[#6b7488] pt-3 pb-2.5">
      <legend className="-mx-px text-sm leading-5 text-[#6b7488]">Custom</legend>
      <div className="flex flex-col gap-[18px]">
        <SideItem icon="drone" label="Drone" />
        <SideItem icon="game" label="Gam..." />
        <SideItem icon="car" label="Car" />
      </div>
    </fieldset>
    <SideItem icon="star" label="Favorites" />
  </nav>
);

const FileTree = () => {
  const [selected, setSelected] = useState("Maimang 11-AZf8C YiDianTong.pcb");

  return (
    <div className="min-w-0 flex-1 overflow-hidden bg-[#f7f7f7] bg-linear-to-r from-[#d9e1f1] to-[#f7f7f7] to-10% pr-3">
      <ul className="-mt-3">
        {TREE.map((node) => (
          <li key={node.name} className={`flex h-6 items-center overflow-hidden ${INDENT[node.level]}`}>
            <button
              type="button"
              onClick={() => setSelected(node.name)}
              className={`flex min-w-0 items-center text-sm whitespace-nowrap ${
                node.type === "group" ? "gap-1.5" : "gap-1 pl-0.5"
              } ${selected === node.name ? "text-[#5a9bff]" : "text-black"}`}
            >
              {node.type === "group" && <FoldIcon />}
              {node.type === "pcb" && <PcbIcon />}
              {node.type === "pdf" && <PdfIcon />}
              <span className="overflow-hidden">{node.name}</span>
            </button>
          </li>
        ))}
      </ul>
    </div>
  );
};

const Tabs = () => (
  <div className="flex h-[34px] shrink-0 items-center gap-[5px] border-b border-[#dcdcdc] bg-[#fafafa] pr-2.5 pl-2">
    <button type="button" className="flex h-6 items-center gap-[3px] rounded-sm border border-[#888] pr-[5px] pl-[5px] text-sm text-[#888]">
      <svg viewBox="0 0 20 20" className="size-5" fill="none" stroke="#222" strokeWidth="1.600">
        <path d="M1.500 10.500L10 2l8.500 8.500M4 9v9h12V9M8 18v-6h4v6" />
      </svg>
      Member Center
    </button>
    <button type="button" className="h-6 rounded-sm border border-black bg-white px-5 text-sm font-bold">
      Maimang 11-AZf8C YiDianTong.pcb
    </button>
    <button type="button" aria-label="Close all" className="ml-auto">
      <svg viewBox="0 0 18 18" className="size-[18px]">
        <path d="M1 14V1h14" fill="none" stroke="#8a8a8a" strokeWidth="2" />
        <rect x="4" y="4" width="14" height="14" rx="2" fill="#8a8a8a" />
        <path d="M8 8l6 6M14 8l-6 6" stroke="#fff" strokeWidth="1.500" />
      </svg>
    </button>
  </div>
);

const Toolbar = () => (
  <div className="flex h-[26px] shrink-0 items-center gap-0.5 bg-[#fafafa] pr-1.5 pl-[5px]">
    <ToolButton icon="split" title="Split view" />
    <Separator />
    <ToolButton icon="zoomIn" title="Zoom in" />
    <ToolButton icon="zoomOut" title="Zoom out" />
    <Separator />
    <ToolButton icon="fit" title="Fit" />
    <Separator />
    <ToolButton icon="rotateLeft" title="Rotate left" />
    <ToolButton icon="rotateRight" title="Rotate right" />
    <Separator />
    <ToolButton icon="roller" title="Paint" />
    <Separator />
    <ToolButton icon="mirror" title="Mirror" />
    <ToolButton icon="lamp" title="Light" on />
    <button type="button" className="w-6 shrink-0 text-sm">3D</button>
    <ToolButton icon="diode" title="Diode" on />
    <ToolButton icon="route" title="Routes" on />
    <ToolButton icon="curve" title="Curve" />
    <Separator />
    <ToolButton icon="mouse" title="Mouse" />
    <Separator />
    <button type="button" className="h-[22px] w-[109px] shrink-0 border border-[red] text-sm leading-5 whitespace-nowrap">
      [ColorScheme]
    </button>
    <Separator />
    <ToolButton icon="eye" title="Show" />
    <button type="button" aria-label="Side panel" className="ml-auto">
      <svg viewBox="0 0 22 18" className="h-[18px] w-[22px]" fill="none" stroke="#777" strokeWidth="1.600">
        <path d="M1 1h20v16H1zM7.500 1v16M11 5h7M11 9h7M11 13h7" />
      </svg>
    </button>
  </div>
);

const App = () => (
  <div className="flex h-screen flex-col overflow-hidden bg-white font-['Noto_Sans','Open_Sans',sans-serif] text-black">
    <TitleBar />
    <nav className="flex h-8 shrink-0 items-center gap-[18px] border-b border-[#d9d9d9] bg-[#efefef] pl-[18px]">
      {MENUS.map((m) => (
        <button key={m} type="button" className="text-sm">
          {m}
        </button>
      ))}
    </nav>

    <div className="flex min-h-0 flex-1">
      <aside className="flex w-[431px] shrink-0 flex-col border-r border-[#dcdcdc]">
        <SearchBar />
        <div className="flex min-h-0 flex-1 overflow-hidden">
          <SideNav />
          <div className="relative flex min-w-0 flex-1">
            <FileTree />
            <span className="absolute top-0 right-[13px] h-10 w-2.5 rounded-b-md bg-[#666]" />
            <div className="flex w-3 flex-col items-center bg-[#f0f0f0] pt-1">
              <svg viewBox="0 0 10 10" className="size-2.5" fill="none" stroke="#444">
                <path d="M1 7l4-4 4 4" />
              </svg>
              <span className="mt-[510px] h-12 w-[9px] shrink-0 rounded-full bg-[#666]" />
            </div>
          </div>
        </div>
      </aside>

      <button type="button" aria-label="Collapse file list" className="flex w-[9px] shrink-0 flex-col items-end bg-[#fbfffb] pt-[338px]">
        <Handle />
      </button>

      <main className="flex min-w-0 flex-1 flex-col border-l border-[#dcdcdc]">
        <Tabs />
        <div className="flex min-h-0 flex-1">
          <div className="flex min-w-0 flex-1 flex-col">
            <Toolbar />
            <div className="min-h-0 flex-1 overflow-hidden bg-white">
              <BoardView />
            </div>
          </div>
          <button type="button" aria-label="Open side panel" className="flex w-2.5 shrink-0 flex-col items-end border-l border-[#dcdcdc] bg-[#fafafa] pt-[326px]">
            <Handle flip />
          </button>
        </div>
      </main>
    </div>

    <footer className="flex h-5 shrink-0 items-center justify-center bg-[#0d8bd9] font-['Liberation_Mono',monospace] text-[15px] text-white">
      XZZ Schematics https://www.xzz.hk
    </footer>
  </div>
);

export default App;
